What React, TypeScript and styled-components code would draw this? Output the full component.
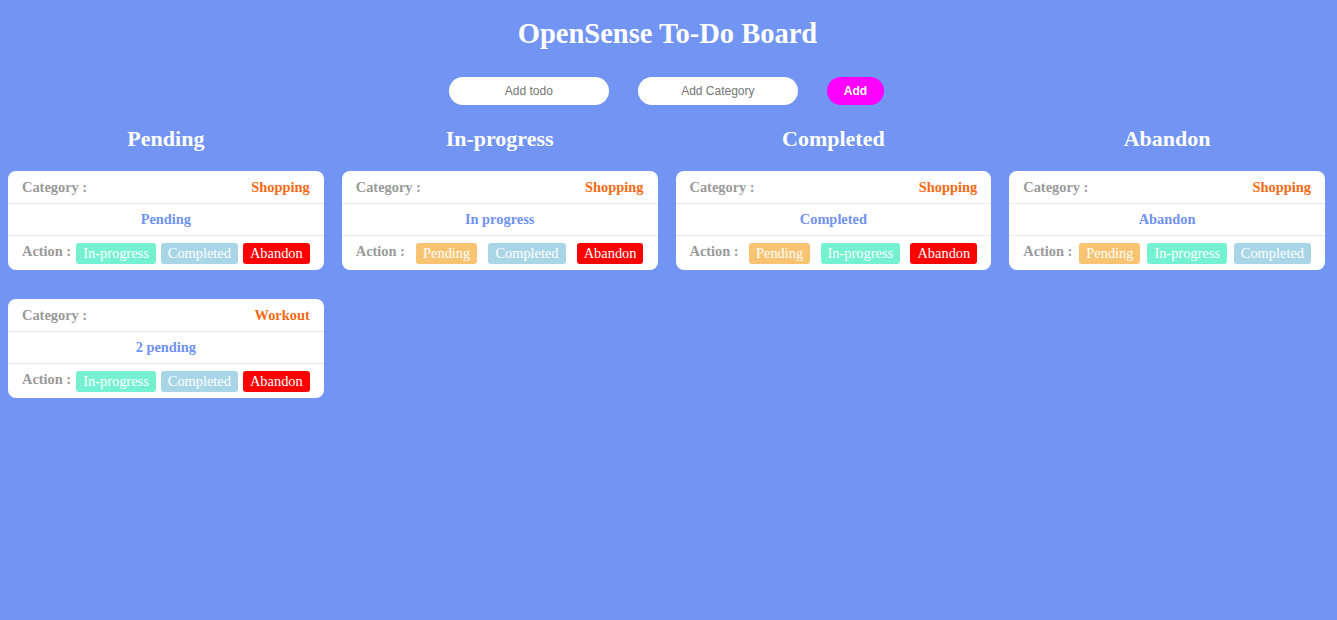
import React from "react";
import styled, { createGlobalStyle } from "styled-components";

const GlobalStyle = createGlobalStyle`
  html, body {
    margin: 0;
    padding: 0;
    background: #7294f2;
    min-height: 620px;
  }
  body {
    font-family: "Liberation Serif", "Times New Roman", serif;
  }
`;

const Page = styled.div`
  display: flex;
  flex-direction: column;
  align-items: stretch;
  min-height: 620px;
  background: #7294f2;
`;

const Title = styled.h1`
  margin: 0;
  padding-top: 18px;
  font-family: "Liberation Serif", "Times New Roman", serif;
  font-size: 28.5px;
  line-height: 32px;
  font-weight: 700;
  color: #ffffff;
  text-align: center;
  transform: translateX(-1px);
`;

const Toolbar = styled.div`
  display: flex;
  justify-content: center;
  align-items: center;
  gap: 29px;
  margin-top: 27px;
  padding-right: 4px;
`;

const TextInput = styled.input`
  box-sizing: border-box;
  width: 160px;
  height: 28px;
  border: none;
  border-radius: 14px;
  background: #ffffff;
  font-family: "Liberation Sans", Arial, sans-serif;
  font-size: 12px;
  text-align: center;
  outline: none;
  padding: 0 10px;
  color: #333;
  &::placeholder {
    color: #757575;
  }
`;

const AddButton = styled.button`
  box-sizing: border-box;
  height: 28px;
  padding: 0 17px;
  border: none;
  border-radius: 14px;
  background: #ff00ff;
  color: #ffffff;
  font-family: "Liberation Sans", Arial, sans-serif;
  font-size: 12px;
  font-weight: 700;
  cursor: pointer;
`;

const Board = styled.div`
  display: grid;
  grid-template-columns: repeat(4, 1fr);
  padding-right: 2px;
  margin-top: 21px;
`;

const Column = styled.section`
  display: flex;
  flex-direction: column;
  padding: 0 10px 0 8px;
  gap: 29px;
`;

const ColumnTitle = styled.h2`
  margin: 0 0 -9px 0;
  font-family: "Liberation Serif", "Times New Roman", serif;
  font-size: 22px;
  line-height: 25px;
  font-weight: 700;
  color: #ffffff;
  text-align: center;
`;

const Card = styled.div`
  background: #ffffff;
  border-radius: 8px;
  display: flex;
  flex-direction: column;
  font-size: 14.4px;
  line-height: 16.5px;
`;

const Row = styled.div<{ $align?: "between" | "center" }>`
  display: flex;
  justify-content: ${(p) => (p.$align === "center" ? "center" : "space-between")};
  align-items: flex-start;
  padding: 7.5px 14px 7.5px;
  border-bottom: 1px solid #e8e8e8;
  &:last-child {
    border-bottom: none;
    padding: 7px 14px 6.5px;
  }
`;

const Label = styled.span`
  font-weight: 700;
  color: #9a9a9a;
`;

const CategoryName = styled.span`
  font-weight: 700;
  color: #f76a14;
`;

const Status = styled.span`
  font-weight: 700;
  color: #7192f2;
`;

const ActionButton = styled.button<{ $bg: string }>`
  border: none;
  border-radius: 3px;
  padding: 2px 7px;
  margin: 0;
  background: ${(p) => p.$bg};
  color: #ffffff;
  font-family: "Liberation Serif", "Times New Roman", serif;
  font-size: 14.4px;
  line-height: 16.5px;
  cursor: pointer;
`;

type StatusKey = "Pending" | "In-progress" | "Completed" | "Abandon";

const statusColors: Record<StatusKey, string> = {
  Pending: "#f8c471",
  "In-progress": "#74f1d0",
  Completed: "#a8d6e7",
  Abandon: "#ff0000",
};

const order: StatusKey[] = ["Pending", "In-progress", "Completed", "Abandon"];

type Todo = { category: string; text: string };

const columns: { title: StatusKey; todos: Todo[] }[] = [
  {
    title: "Pending",
    todos: [
      { category: "Shopping", text: "Pending" },
      { category: "Workout", text: "2 pending" },
    ],
  },
  { title: "In-progress", todos: [{ category: "Shopping", text: "In progress" }] },
  { title: "Completed", todos: [{ category: "Shopping", text: "Completed" }] },
  { title: "Abandon", todos: [{ category: "Shopping", text: "Abandon" }] },
];

const TodoCard: React.FC<{ todo: Todo; status: StatusKey }> = ({ todo, status }) => (
  <Card>
    <Row>
      <Label>Category :</Label>
      <CategoryName>{todo.category}</CategoryName>
    </Row>
    <Row $align="center">
      <Status>{todo.text}</Status>
    </Row>
    <Row>
      <Label>Action :</Label>
      {order
        .filter((s) => s !== status)
        .map((s) => (
          <ActionButton key={s} $bg={statusColors[s]}>
            {s}
          </ActionButton>
        ))}
    </Row>
  </Card>
);

export default function App() {
  return (
    <>
      <GlobalStyle />
      <Page>
        <Title>OpenSense To-Do Board</Title>
        <Toolbar>
          <TextInput placeholder="Add todo" />
          <TextInput placeholder="Add Category" />
          <AddButton>Add</AddButton>
        </Toolbar>
        <Board>
          {columns.map((col) => (
            <Column key={col.title}>
              <ColumnTitle>{col.title}</ColumnTitle>
              {col.todos.map((t, i) => (
                <TodoCard key={i} todo={t} status={col.title} />
              ))}
            </Column>
          ))}
        </Board>
      </Page>
    </>
  );
}
